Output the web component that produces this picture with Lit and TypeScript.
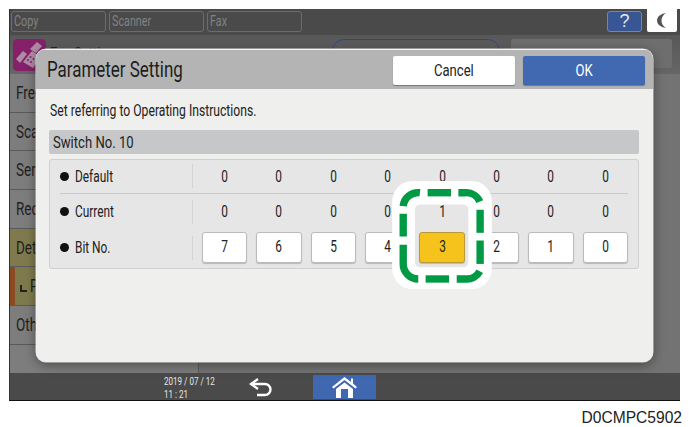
import { LitElement, html, css, svg } from "lit";
import { customElement } from "lit/decorators.js";

const BITS = [7, 6, 5, 4, 3, 2, 1, 0];
const DEFAULTS = [0, 0, 0, 0, 0, 0, 0, 0];
const CURRENT = [0, 0, 0, 0, 1, 0, 0, 0];
const RAIL = [
  { label: "Frequently Used" },
  { label: "Scan Settings" },
  { label: "Send Settings" },
  { label: "Reception Settings" },
  { label: "Detailed Features", cls: "olive" },
  { label: "Parameter Setting", cls: "olive mark" },
  { label: "Other" },
];

// the panel font is a condensed face, none is installed so squeeze Roboto
const cn = (s: string | number) => html`<span class="cn">${s}</span>`;
const mid = (s: string | number) => html`<span class="cn mid">${s}</span>`;

@customElement("app-root")
export class AppRoot extends LitElement {
  static styles = css`
    :host {
      display: block;
      position: relative;
      width: 691px;
      height: 427px;
      background: #fff;
      overflow: hidden;
      font-family: "Roboto", sans-serif;
      color: #222;
    }
    .cn {
      display: inline-block;
      transform: scaleX(0.77);
      transform-origin: left center;
      white-space: nowrap;
    }
    .cn.mid {
      transform-origin: center;
    }
    .screen {
      display: flex;
      flex-direction: column;
      width: 671px;
      height: 392px;
      margin: 9px 0 0 9px;
      box-sizing: border-box;
      border-left: 1px solid #333;
      border-bottom: 1px solid #111;
      background: #737373;
    }
    .topbar {
      flex: 0 0 26px;
      display: flex;
      align-items: flex-start;
      gap: 3px;
      padding: 2px 3px 0 1px;
      box-sizing: border-box;
      background: #4a4a4a;
    }
    .tab {
      box-sizing: border-box;
      width: 95px;
      height: 21px;
      padding-left: 2px;
      border: 1px solid #6c6c6c;
      border-radius: 3px;
      color: #828282;
      font-size: 14px;
      line-height: 19px;
    }
    .help {
      box-sizing: border-box;
      width: 35px;
      height: 21px;
      margin-left: auto;
      margin-right: 2px;
      border: 1px solid #6f86b4;
      border-radius: 3px;
      background: #385594;
      color: #e8e8e8;
      font: 18px/19px "Liberation Sans", sans-serif;
      text-align: center;
    }
    .moon {
      width: 30px;
      height: 23px;
      margin-top: -2px;
      background: #fff;
      display: flex;
      align-items: center;
      justify-content: center;
      border-radius: 0 0 2px 2px;
    }
    .subhead {
      flex: 0 0 39px;
      display: flex;
      align-items: flex-start;
      padding: 4px 8px 0 3px;
      box-sizing: border-box;
      background: linear-gradient(#585858, #666);
    }
    .fax-icon {
      flex: none;
      width: 33px;
      height: 32px;
      border-radius: 4px;
    }
    .subtitle {
      flex: none;
      width: 282px;
      margin-left: 4px;
      padding-top: 4px;
      color: #222;
      font-size: 17px;
    }
    .search {
      box-sizing: border-box;
      width: 168px;
      height: 30px;
      border: 1px solid #2c4a8c;
      border-radius: 12px;
    }
    .grey-btn {
      margin-left: auto;
      width: 161px;
      height: 29px;
      border-radius: 2px;
      background: #6e6e6e;
    }
    .middle {
      flex: 1;
      display: flex;
      min-height: 0;
    }
    .rail {
      width: 188px;
      flex: none;
      border-right: 1px solid #5f5f5f;
      background: #7d7d7d;
    }
    .rail-item {
      box-sizing: border-box;
      height: 38.7px;
      padding-left: 6px;
      border-bottom: 1px solid #5a5a5a;
      color: #1f1f1f;
      font-size: 17.5px;
      line-height: 38px;
      white-space: nowrap;
    }
    .rail-item.olive {
      background: #7f7a4e;
    }
    .rail-item.mark {
      padding-left: 5px;
      border-left: 5px solid #8a4a22;
    }
    .tick {
      display: inline-block;
      width: 5px;
      height: 5px;
      margin-right: 3px;
      border-left: 2px solid #222;
      border-bottom: 2px solid #222;
    }
    .bottombar {
      flex: 0 0 24px;
      display: flex;
      align-items: center;
      box-sizing: border-box;
      padding-left: 154px;
      background: #4a4a4a;
      color: #e6e6e6;
    }
    .clock {
      width: 85px;
      padding-top: 2px;
      font-size: 11.5px;
      line-height: 12.5px;
    }
    .clock .cn {
      transform: scaleX(0.7);
      display: block;
    }
    .back {
      display: flex;
      width: 64px;
    }
    .home {
      width: 63px;
      height: 24px;
      display: flex;
      align-items: center;
      justify-content: center;
      background: #3f68b0;
    }
    .code {
      margin: 8px 9px 0 0;
      text-align: right;
      font: 15.6px/17px "Liberation Sans", sans-serif;
      color: #222;
    }

    .dialog {
      position: absolute;
      left: 36px;
      top: 49px;
      width: 617px;
      height: 313px;
      box-sizing: border-box;
      border-radius: 10px;
      overflow: hidden;
      display: flex;
      flex-direction: column;
      background: #efefed;
      box-shadow: 0 0 0 0.5px #ddd, 0 3px 12px rgba(0, 0, 0, 0.4);
    }
    .head {
      flex: 0 0 40px;
      display: flex;
      align-items: center;
      gap: 8px;
      padding: 0 8px 0 11px;
      box-sizing: border-box;
      border-top: 1px solid #f4f4f4;
      background: #b4b4b4;
    }
    .title {
      margin-right: auto;
      font-size: 22px;
      color: #1d1d1d;
    }
    .act {
      box-sizing: border-box;
      width: 122px;
      height: 29px;
      margin-top: 1px;
      border-radius: 2px;
      background: #fff;
      box-shadow: 0 1px 1px rgba(0, 0, 0, 0.35);
      font-size: 17px;
      line-height: 29px;
      text-align: center;
    }
    .act.primary {
      background: #4169b2;
      color: #fff;
    }
    .content {
      padding: 12px 14px 0 13px;
    }
    .hint {
      padding-left: 1px;
      font-size: 15.8px;
      line-height: 20px;
    }
    .switch {
      height: 24px;
      margin-top: 9px;
      padding-left: 4px;
      border-radius: 2px;
      background: #c6c7c9;
      font-size: 17px;
      line-height: 24px;
    }
    .table {
      box-sizing: border-box;
      height: 110px;
      margin-top: 5px;
      padding: 0 10px;
      border: 1px solid #cfcfcf;
      border-radius: 3px;
      background: #e6e6e6;
    }
    .row {
      display: grid;
      grid-template-columns: 133px repeat(8, 45.6px);
      column-gap: 8.8px;
      align-items: center;
      box-sizing: border-box;
      height: 36px;
      padding-bottom: 1px;
      font-size: 16.5px;
    }
    .row .cn {
      transform: scaleX(0.72);
    }
    .row.first {
      height: 34px;
      border-bottom: 1px solid #c9c9c9;
    }
    .label {
      display: flex;
      align-items: center;
      gap: 6px;
      height: 24px;
      border-right: 1px solid #d3d3d3;
    }
    .dot {
      flex: none;
      width: 9px;
      height: 9px;
      border-radius: 50%;
      background: #111;
    }
    .val {
      text-align: center;
    }
    .bit {
      box-sizing: border-box;
      height: 31px;
      border: 1px solid #bbb;
      border-radius: 3px;
      background: #fff;
      box-shadow: 0 1px 1px rgba(0, 0, 0, 0.2);
      line-height: 28px;
      text-align: center;
    }
    .bit.on {
      border-color: #b89a3a;
      background: #f5c31c;
    }
    .callout {
      position: absolute;
      left: 392px;
      top: 181px;
      width: 100px;
      height: 108px;
    }
  `;

  private faxIcon() {
    return html`<svg class="fax-icon" viewBox="0 0 33 32">
      <rect width="33" height="32" rx="4" fill="#86206a" />
      <g fill="#ad8ca4">
        <path d="M3 20 L10 12 L14 15 L7 24 Z" />
        <path d="M10 23 L19 12 L28 18 L20 29 Z" />
        <path d="M17 10 L24 3 L29 7 L23 14 Z" />
      </g>
      <g fill="#86206a">
        <circle cx="15" cy="21" r="1" />
        <circle cx="18" cy="23" r="1" />
        <circle cx="17.500" cy="18" r="1" />
        <circle cx="20.500" cy="20" r="1" />
      </g>
    </svg>`;
  }

  private callout() {
    return html`<svg class="callout" viewBox="0 0 298 323">
      <path
        fill="#fff"
        fill-rule="evenodd"
        d="M60 0 H238 A60 60 0 0 1 298 60 V263 A60 60 0 0 1 238 323 H60 A60 60 0 0 1 0 263 V60 A60 60 0 0 1 60 0 Z
           M84 70 A16 16 0 0 0 68 86 V242 A16 16 0 0 0 84 258 H212 A16 16 0 0 0 228 242 V86 A16 16 0 0 0 212 70 Z"
      />
      <g fill="none" stroke="#009944" stroke-width="22">
        ${[
          "M33 75 A45 45 0 0 1 83 35",
          "M106 35 H176",
          "M198 35 H220 A43 43 0 0 1 262 62",
          "M263 86 V155",
          "M263 178 V248",
          "M193 293 H220 A43 43 0 0 0 262 270",
          "M100 293 H170",
          "M78 293 A45 45 0 0 1 33 248 V191",
          "M33 98 V166",
        ].map((d) => svg`<path d=${d} />`)}
      </g>
    </svg>`;
  }

  render() {
    return html`
      <div class="screen">
        <div class="topbar">
          <div class="tab">${cn("Copy")}</div>
          <div class="tab">${cn("Scanner")}</div>
          <div class="tab">${cn("Fax")}</div>
          <div class="help">?</div>
          <div class="moon">
            <svg width="10" height="15" viewBox="0 0 10 15">
              <path d="M9 0 C3 1 0 4 0 7.500 C0 11 3 14 9 15 C6 13 4.500 10.500 4.500 7.500 C4.500 4.500 6 2 9 0 Z" fill="#555" />
            </svg>
          </div>
        </div>
        <div class="subhead">
          ${this.faxIcon()}
          <div class="subtitle">${cn("Fax Settings")}</div>
          <div class="search"></div>
          <div class="grey-btn"></div>
        </div>
        <div class="middle">
          <div class="rail">
            ${RAIL.map(
              (r) => html`<div class="rail-item ${r.cls ?? ""}">
                ${r.cls?.includes("mark") ? html`<span class="tick"></span>` : ""}${cn(r.label)}
              </div>`
            )}
          </div>
        </div>
        <div class="bottombar">
          <div class="clock">${cn("2019 / 07 / 12")}${cn("11 : 21")}</div>
          <div class="back">
            <svg width="24" height="20" viewBox="0 0 24 20" fill="none" stroke="#fff" stroke-width="2.4">
              <path d="M9 2 L2 7 L9 12" />
              <path d="M2 7 H16 A5.500 5.500 0 0 1 16 18 H8" />
            </svg>
          </div>
          <div class="home">
            <svg width="25" height="22" viewBox="0 0 25 22" fill="#fff">
              <path d="M12.500 1 L19 6 V2.500 H21 V7.500 L25 11 L23.500 12.500 L12.500 4 L1.500 12.500 L0 11 Z" />
              <path fill-rule="evenodd" d="M4 13 L12.500 6.500 L21 13 V22 H4 Z M9 13 V22 H16 V13 Z" />
            </svg>
          </div>
        </div>
      </div>
      <div class="code">D0CMPC5902</div>

      <div class="dialog">
        <div class="head">
          <div class="title">${cn("Parameter Setting")}</div>
          <div class="act">${mid("Cancel")}</div>
          <div class="act primary">${mid("OK")}</div>
        </div>
        <div class="content">
          <div class="hint">${cn("Set referring to Operating Instructions.")}</div>
          <div class="switch">${cn("Switch No. 10")}</div>
          <div class="table">
            <div class="row first">
              <div class="label"><span class="dot"></span>${cn("Default")}</div>
              ${DEFAULTS.map((v) => html`<div class="val">${mid(v)}</div>`)}
            </div>
            <div class="row">
              <div class="label"><span class="dot"></span>${cn("Current")}</div>
              ${CURRENT.map((v) => html`<div class="val">${mid(v)}</div>`)}
            </div>
            <div class="row">
              <div class="label"><span class="dot"></span>${cn("Bit No.")}</div>
              ${BITS.map((b) => html`<div class="bit ${b === 3 ? "on" : ""}">${mid(b)}</div>`)}
            </div>
          </div>
        </div>
      </div>
      ${this.callout()}
    `;
  }
}
